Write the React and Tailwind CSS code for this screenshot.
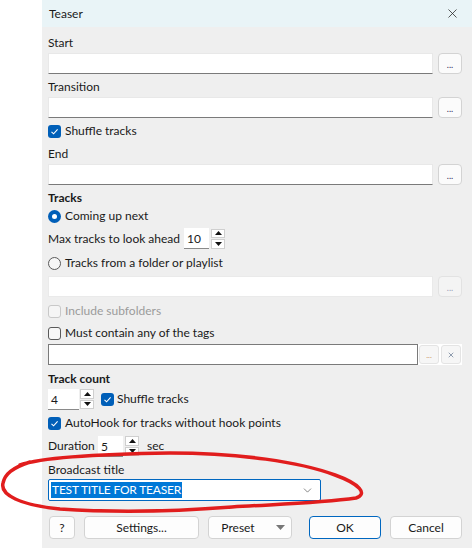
import { X, ChevronDown } from 'lucide-react'

const FONT = "font-['Lato','Segoe_UI',sans-serif]"

function Check({ checked, disabled }) {
  if (checked) {
    return (
      <span className="w-[13px] h-[13px] rounded-[3px] bg-[#005fb8] flex items-center justify-center shrink-0">
        <svg width="9" height="9" viewBox="0 0 9 9">
          <path d="M1.5 4.8 L3.6 6.8 L7.6 2.4" fill="none" stroke="#fff" strokeWidth="1.1" />
        </svg>
      </span>
    )
  }
  return (
    <span
      className={`w-[13px] h-[13px] rounded-[3px] border shrink-0 ${
        disabled ? 'border-[#c8c8c8] bg-[#f5f5f5]' : 'border-[#5a5a5a] bg-[#f7f7f7]'
      }`}
    />
  )
}

function Radio({ checked }) {
  if (checked) {
    return (
      <span className="w-[13px] h-[13px] rounded-full bg-[#005fb8] flex items-center justify-center shrink-0">
        <span className="w-[5px] h-[5px] rounded-full bg-white" />
      </span>
    )
  }
  return <span className="w-[13px] h-[13px] rounded-full border border-[#5a5a5a] bg-[#f7f7f7] shrink-0" />
}

function Spinner() {
  return (
    <div className="flex flex-col w-[14px] h-[20px] gap-[1px] shrink-0">
      <div className="flex-1 border border-[#cfcfcf] bg-white flex items-center justify-center">
        <svg width="7" height="4" viewBox="0 0 7 4">
          <path d="M0 4 L3.5 0 L7 4 Z" fill="#111" />
        </svg>
      </div>
      <div className="flex-1 border border-[#cfcfcf] bg-white flex items-center justify-center">
        <svg width="7" height="4" viewBox="0 0 7 4">
          <path d="M0 0 L3.5 4 L7 0 Z" fill="#111" />
        </svg>
      </div>
    </div>
  )
}

function NumBox({ value, width }) {
  return (
    <div className={`${width} h-[21px] bg-white border-b border-[#8a8a8a] pl-[3px] leading-[21px] shrink-0`}>
      {value}
    </div>
  )
}

function Dots({ disabled }) {
  return (
    <div
      className={`w-[24px] h-[21px] ml-[5px] rounded-[4px] border flex items-end justify-center pb-[4px] text-[9px] leading-none shrink-0 ${
        disabled ? 'border-[#e2e2e2] bg-[#f4f4f4] text-[#9aa0b8]' : 'border-[#d3d3d3] bg-[#fbfbfb] text-[#303060]'
      }`}
    >
      ...
    </div>
  )
}

function PathRow({ disabled }) {
  return (
    <div className="flex h-[21px]">
      <div
        className={`flex-1 bg-white border ${
          disabled ? 'border-[#eaeaea]' : 'border-[#e8e8e8] border-b-[#7a7a7a]'
        }`}
      />
      <Dots disabled={disabled} />
    </div>
  )
}

function Button({ children, className }) {
  return (
    <div
      className={`h-[23px] rounded-[4px] border bg-[#fdfdfd] flex items-center justify-center ${className}`}
    >
      {children}
    </div>
  )
}

export default function App() {
  return (
    <div className={`relative w-[472px] h-[548px] bg-white text-[12px] text-[#1a1a1a] ${FONT}`}>
      <div className="ml-[42px] h-full bg-[#efefef] flex flex-col">
        {/* title bar */}
        <div className="h-[27px] bg-[#e9f4f7] flex items-center justify-between pl-[7px] pr-[12px]">
          <span>Teaser</span>
          <X size={15} strokeWidth={1.2} className="text-[#222]" />
        </div>

        <div className="flex flex-col pl-[6px] pr-[10px] whitespace-nowrap">
          <div className="mt-[7px] h-[18px] leading-[18px]">Start</div>
          <div className="mt-[1px]"><PathRow /></div>

          <div className="mt-[4px] h-[18px] leading-[18px]">Transition</div>
          <div className="mt-[1px]"><PathRow /></div>

          <div className="mt-[4px] h-[18px] flex items-center gap-[4px]">
            <Check checked />
            <span>Shuffle tracks</span>
          </div>

          <div className="mt-[5px] h-[18px] leading-[18px]">End</div>
          <div className="mt-[1px]"><PathRow /></div>

          <div className="mt-[4px] h-[18px] leading-[18px] font-bold">Tracks</div>
          <div className="h-[18px] flex items-center gap-[4px]">
            <Radio checked />
            <span>Coming up next</span>
          </div>
          <div className="mt-[3px] h-[21px] flex items-center">
            <span className="w-[136px] shrink-0">Max tracks to look ahead</span>
            <NumBox value="10" width="w-[25px]" />
            <div className="ml-[2px]"><Spinner /></div>
          </div>
          <div className="mt-[5px] h-[18px] flex items-center gap-[4px]">
            <Radio />
            <span>Tracks from a folder or playlist</span>
          </div>
          <div className="mt-[4px]"><PathRow disabled /></div>

          <div className="mt-[5px] h-[18px] flex items-center gap-[4px] text-[#9b9b9b]">
            <Check disabled />
            <span>Include subfolders</span>
          </div>
          <div className="mt-[4px] h-[18px] flex items-center gap-[4px]">
            <Check />
            <span>Must contain any of the tags</span>
          </div>
          <div className="mt-[2px] h-[21px] flex">
            <div className="flex-1 bg-white border border-[#7a7a7a]" />
            <div className="w-[44px] bg-white flex items-center gap-[2px] px-[1px]">
              <div className="w-[20px] h-[19px] rounded-[3px] border border-[#e4e4e4] bg-[#f6f6f6] flex items-end justify-center pb-[4px] text-[8px] leading-none text-[#c89060]">
                ...
              </div>
              <div className="w-[20px] h-[19px] rounded-[3px] border border-[#e4e4e4] bg-[#f6f6f6] flex items-center justify-center">
                <X size={8} strokeWidth={2.5} className="text-[#7a8aa0]" />
              </div>
            </div>
          </div>

          <div className="mt-[5px] h-[18px] leading-[18px] font-bold">Track count</div>
          <div className="h-[22px] flex items-center">
            <NumBox value="4" width="w-[31px]" />
            <div className="ml-[1px]"><Spinner /></div>
            <div className="ml-[7px] flex items-center gap-[3px]">
              <Check checked />
              <span>Shuffle tracks</span>
            </div>
          </div>
          <div className="mt-[4px] h-[18px] flex items-center gap-[4px]">
            <Check checked />
            <span>AutoHook for tracks without hook points</span>
          </div>
          <div className="mt-[3px] h-[22px] flex items-center">
            <span className="w-[50px] shrink-0">Duration</span>
            <NumBox value="5" width="w-[25px]" />
            <div className="ml-[2px]"><Spinner /></div>
            <span className="ml-[8px]">sec</span>
          </div>

          <div className="mt-[4px] h-[18px] leading-[18px]">Broadcast title</div>
          <div className="w-[273px] h-[22px] bg-white border border-[#0067c0] rounded-[2px] flex items-center justify-between pl-[2px] pr-[6px]">
            <span className="bg-[#0078d7] text-white leading-[16px] px-[1px] tracking-[-0.2px]">TEST TITLE FOR TEASER</span>
            <ChevronDown size={13} strokeWidth={1.3} className="text-[#555]" />
          </div>

          <div className="mt-[15px] flex items-center">
            <Button className="w-[26px] ml-[1px] border-[#d3d3d3]">?</Button>
            <Button className="w-[115px] ml-[9px] border-[#d3d3d3]">Settings...</Button>
            <Button className="w-[84px] ml-[9px] border-[#d3d3d3] relative">
              <span className="mr-[24px]">Preset</span>
              <svg width="9" height="5" viewBox="0 0 9 5" className="absolute right-[6px] top-[8px]">
                <path d="M0 0 L9 0 L4.5 5 Z" fill="#777" />
              </svg>
            </Button>
            <Button className="w-[72px] ml-[17px] border-[#0067c0]">OK</Button>
            <Button className="w-[72px] ml-[9px] border-[#d3d3d3]">Cancel</Button>
          </div>
        </div>
      </div>

      {/* hand-drawn marker ring around the title field */}
      <svg className="absolute left-0 top-0 pointer-events-none" width="472" height="548" viewBox="0 0 472 548">
        <path
          d="M 20 465 C 40 458, 100 454, 170 453 C 240 453, 300 462, 335 475 C 360 484, 368 494, 356 498 C 320 503, 280 504, 232 507 C 180 511, 120 513, 60 509 C 20 505, 0 495, 3 483 C 5 474, 12 468, 30 462"
          fill="none"
          stroke="#e11d1d"
          strokeWidth="3.5"
          strokeLinecap="round"
        />
      </svg>
    </div>
  )
}
